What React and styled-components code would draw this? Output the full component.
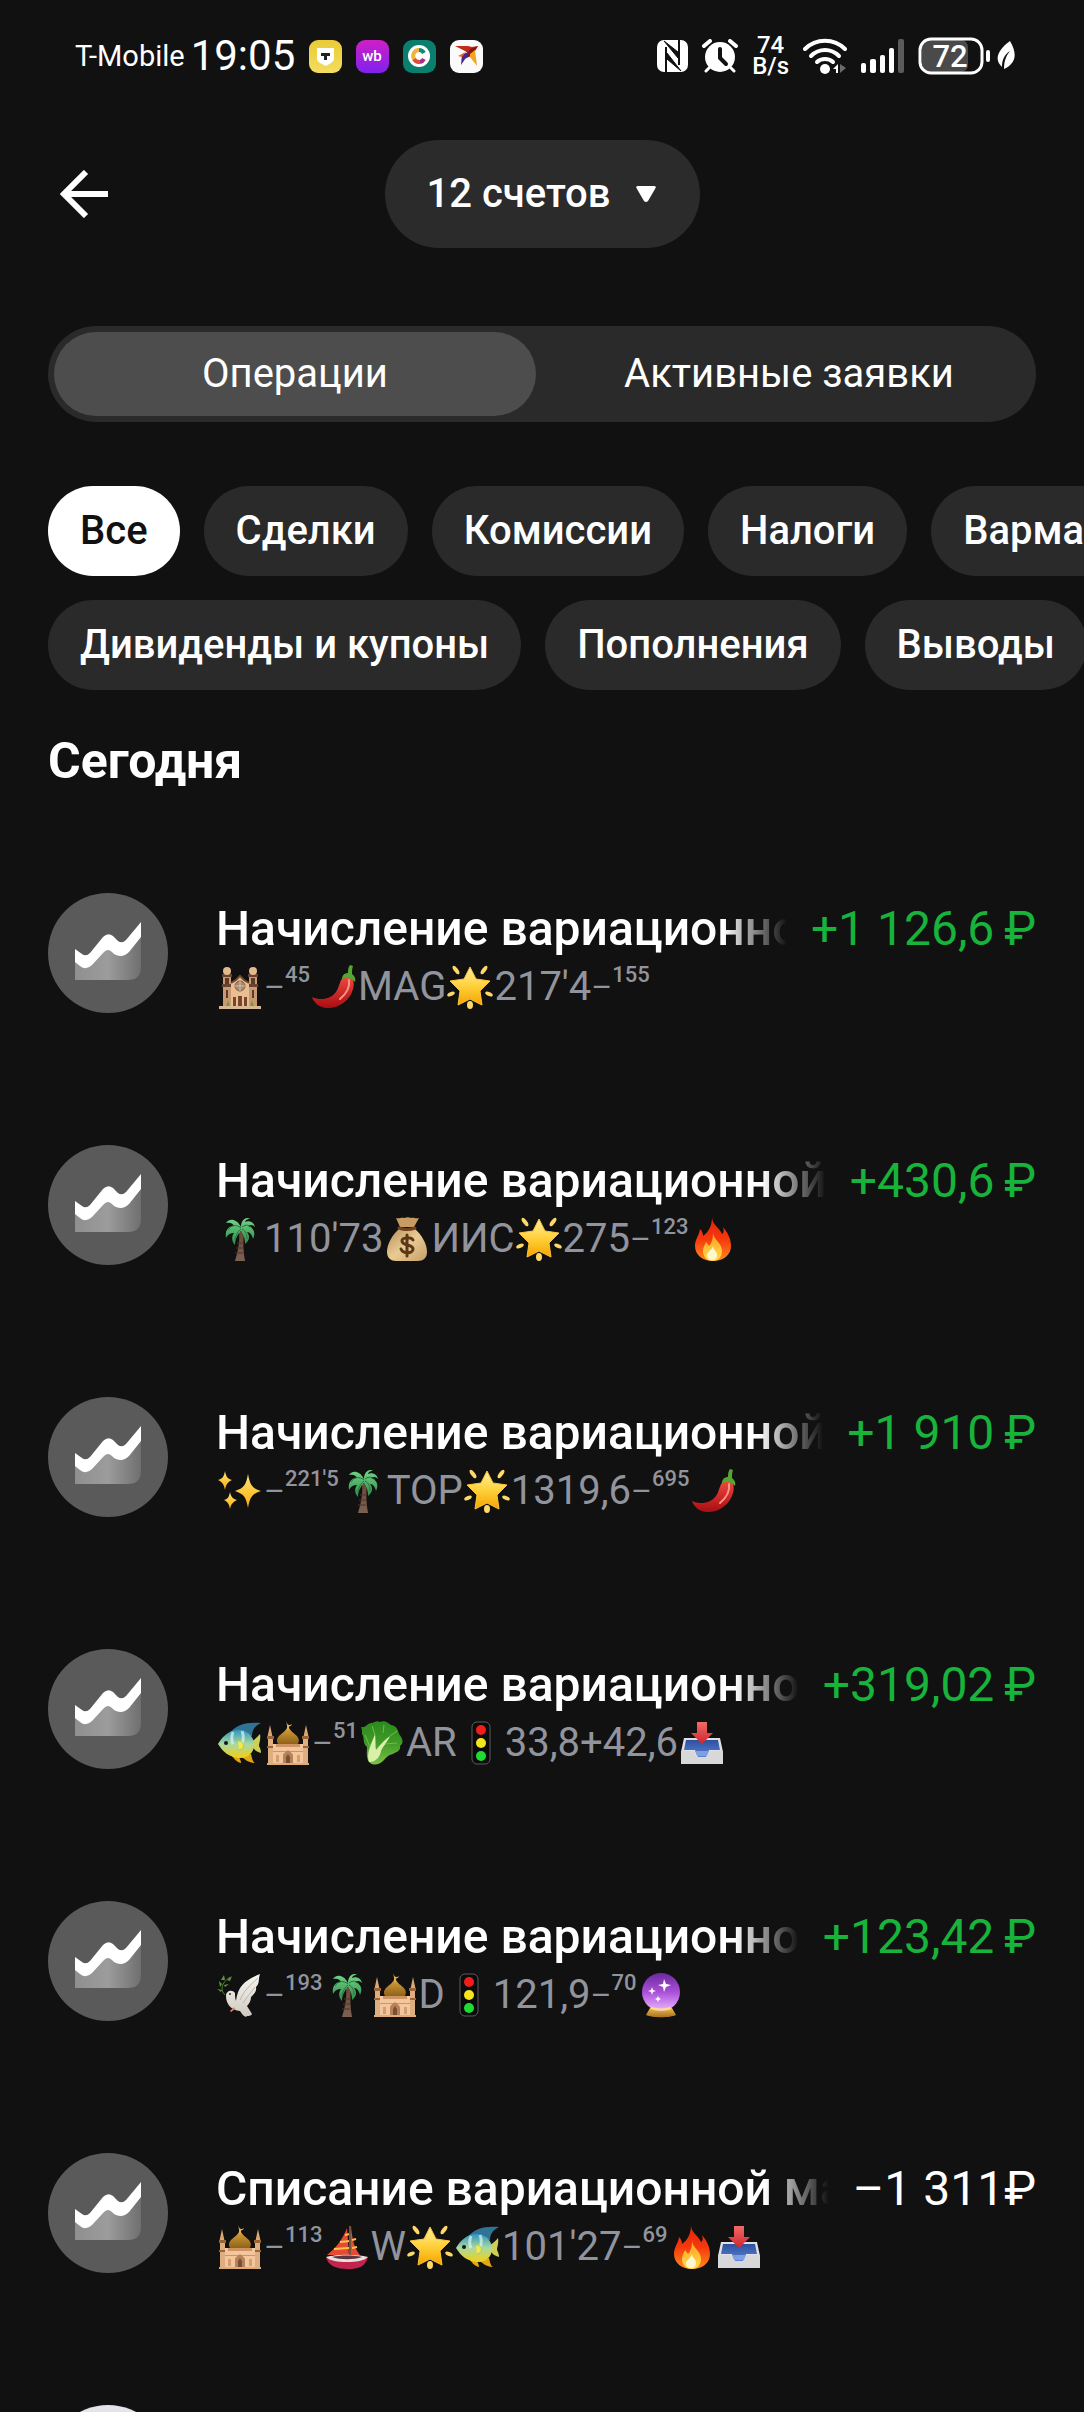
import React, { useState } from 'react';
import styled, { createGlobalStyle } from 'styled-components';

const GlobalStyle = createGlobalStyle`
  * { box-sizing: border-box; }
  body { margin: 0; background: #111111; }
  button, select { font: inherit; color: inherit; border: 0; margin: 0; cursor: pointer; }
`;

const Screen = styled.div`
  height: 100vh;
  display: flex;
  flex-direction: column;
  overflow: hidden;
  background: #111111;
  color: #ffffff;
  font-family: Roboto, 'Noto Sans', sans-serif;
  font-size: 40px;
  line-height: 48px;
`;

const StatusBar = styled.div`
  height: 112px;
  flex: none;
  padding: 0 68px 0 75px;
  display: flex;
  align-items: center;
  justify-content: space-between;
`;

const StatusGroup = styled.div`
  display: flex;
  align-items: center;
  gap: ${(p) => p.$gap}px;
`;

const Carrier = styled.span`
  font-size: 29px;
`;

const Clock = styled.time`
  font-size: 42px;
`;

const Speed = styled.span`
  display: flex;
  flex-direction: column;
  align-items: center;
  font-size: 24px;
  font-weight: 500;
  line-height: 21px;
`;

const TopBar = styled.header`
  flex: none;
  padding: 28px 48px 78px;
  display: grid;
  grid-template-columns: 1fr auto 1fr;
  align-items: center;
`;

const BackButton = styled.button`
  justify-self: start;
  display: flex;
  padding: 12px;
  background: none;
`;

const AccountPicker = styled.div`
  display: inline-grid;
  align-items: center;
  > * { grid-area: 1 / 1; }
  > svg { justify-self: end; margin-right: 44px; pointer-events: none; }
`;

const AccountSelect = styled.select`
  appearance: none;
  height: 108px;
  padding: 0 88px 0 42px;
  border-radius: 54px;
  background: #2b2b2b;
  font-weight: 500;
`;

const Segmented = styled.div`
  flex: none;
  margin: 0 48px;
  padding: 6px;
  display: flex;
  gap: 12px;
  border-radius: 48px;
  background: #2a2a2a;
`;

const Segment = styled.button`
  flex: 1;
  height: 84px;
  border-radius: 42px;
  background: ${(p) => (p.$active ? '#4d4d4d' : 'transparent')};
`;

const Filters = styled.div`
  flex: none;
  padding: 64px 0 43px;
  display: flex;
  flex-direction: column;
  gap: 24px;
`;

const ChipRow = styled.div`
  display: flex;
  gap: 24px;
  padding-left: 48px;
  overflow-x: auto;
  scrollbar-width: none;
`;

const Chip = styled.button`
  flex: none;
  height: 90px;
  padding: 0 32px;
  border-radius: 45px;
  font-weight: 500;
  background: ${(p) => (p.$active ? '#ffffff' : '#2a2a2a')};
  color: ${(p) => (p.$active ? '#111111' : '#ffffff')};
`;

const Feed = styled.main`
  flex: 1;
  min-height: 0;
  overflow-y: auto;
  scrollbar-width: none;
`;

const DayTitle = styled.h2`
  margin: 0 48px 104px;
  font-size: 50px;
  line-height: 56px;
  font-weight: 700;
`;

const OperationList = styled.ul`
  list-style: none;
  margin: 0;
  padding: 0 48px;
  display: flex;
  flex-direction: column;
  gap: 132px;
`;

const OperationRow = styled.li`
  min-height: 120px;
  display: flex;
  align-items: flex-start;
  gap: 48px;
`;

const Avatar = styled.div`
  flex: none;
  width: 120px;
  height: 120px;
  border-radius: 50%;
  background: ${(p) => (p.$light ? '#e2e4e9' : '#5a5a5a')};
`;

const OperationBody = styled.div`
  flex: 1;
  min-width: 0;
  padding-top: 8px;
  display: flex;
  flex-direction: column;
  gap: 6px;
`;

const Headline = styled.div`
  display: flex;
  gap: 24px;
  font-size: 48px;
  line-height: 56px;
`;

const Title = styled.span`
  flex: 1;
  min-width: 0;
  overflow: hidden;
  white-space: nowrap;
  font-weight: 500;
  mask-image: linear-gradient(to right, #000 calc(100% - 64px), transparent);
`;

const Amount = styled.span`
  flex: none;
  white-space: nowrap;
  color: ${(p) => (p.$income ? '#17b33b' : '#ffffff')};
`;

const Account = styled.div`
  display: flex;
  align-items: center;
  height: 48px;
  white-space: nowrap;
  color: #92949d;
`;

const Dash = styled.span`
  font-size: 32px;
`;

const Sup = styled.sup`
  align-self: flex-start;
  font-size: 22px;
  line-height: 24px;
  font-weight: 500;
`;

const EmojiSvg = styled.svg`
  flex: none;
  width: 48px;
  height: 48px;
`;

const SharedDefs = styled.svg`
  display: block;
  width: 0;
  height: 0;
`;

function Gradient({ id, from, mid, to, x2 = 0, y2 = 1 }) {
  return (
    <linearGradient id={id} x1="0" y1="0" x2={x2} y2={y2}>
      <stop offset="0" stopColor={from} />
      {mid && <stop offset="0.5" stopColor={mid} />}
      <stop offset="1" stopColor={to} />
    </linearGradient>
  );
}

const glyphs = {
  synagogue: (
    <>
      <path d="M7 14h8v30H7zM33 14h8v30h-8z" fill="#c99a72" />
      <path d="M6 11h10v3H6zM32 11h10v3H32zM6 21h10v3H6zM32 21h10v3H32z" fill="#6b4230" />
      <circle cx="11" cy="8" r="4" fill="#e3b98f" />
      <circle cx="37" cy="8" r="4" fill="#e3b98f" />
      <path d="M15 20l5-3 4-4 4 4 5 3v24H15z" fill="#e8bf93" />
      <path d="M15 20l5-3 4-4 4 4 5 3" fill="none" stroke="#75492f" strokeWidth="2" />
      <circle cx="24" cy="23" r="5" fill="#a68a78" stroke="#8a5a3d" strokeWidth="1" />
      <path d="M24 18v10M19 23h10" stroke="#d9c0a6" strokeWidth="1" />
      <path d="M9 15h4v6H9zM35 15h4v6h-4zM10 27h2v8h-2zM36 27h2v8h-2z" fill="#5d3b2b" />
      <path d="M17 34h3v9h-3zM22 33h4v10h-4zM28 34h3v9h-3z" fill="#79452b" />
      <path d="M12 37l2 7h-4zM36 37l2 7h-4z" fill="#6f9a35" />
      <path d="M3 43h42v3H3z" fill="#d8b796" />
    </>
  ),
  chili: (
    <>
      <path d="M35 13c8-1 10 6 8 13C40 38 28 46 16 45 9 44 4 40 2 34c9 4 19 2 24-5 4-6 4-14 9-16z" fill="url(#chiliSkin)" />
      <path d="M39 17c1 7-3 14-9 19" fill="none" stroke="#ff9489" strokeWidth="2" strokeLinecap="round" />
      <path d="M32 16c0-4 3-6 6-6 0-3 0-5 2-8l3 1c-1 3-1 5-1 8 3 2 4 5 3 8-4-4-8-5-13-3z" fill="#55a630" />
    </>
  ),
  star: (
    <>
      <path d="M24 4l6 12 14 2-10 10 2 14-12-6-12 6 2-14L4 18l14-2z" fill="url(#starFill)" stroke="#fdc435" strokeWidth="1" strokeLinejoin="round" />
      <g fill="#ffd968">
        <ellipse cx="10" cy="7" rx="2" ry="5" transform="rotate(-36 10 7)" />
        <ellipse cx="38" cy="7" rx="2" ry="5" transform="rotate(36 38 7)" />
        <ellipse cx="5" cy="31" rx="2" ry="4" transform="rotate(66 5 31)" />
        <ellipse cx="43" cy="31" rx="2" ry="4" transform="rotate(-66 43 31)" />
        <ellipse cx="24" cy="42" rx="3" ry="4" />
      </g>
    </>
  ),
  palm: (
    <>
      <path d="M23 17c1 10-1 19-4 29h10c-2-10-2-20-1-29z" fill="url(#trunk)" />
      <path d="M19 38h8M20 33h7M21 28h6" stroke="#4f3528" strokeWidth="1" />
      <path d="M25 12C20 2 12 4 10 8c5-1 7 1 8 3-7 0-9 6-8 12 2-4 5-5 8-5-3 4-2 9 1 12 0-6 3-11 6-14 3 4 4 8 4 13 5-4 5-8 2-12 3 0 5 3 6 7 3-6 1-11-5-13 3-2 5-1 7 1-1-5-6-7-10-5 1-3 3-3 5-3-4-3-9 1-9 8z" fill="url(#palmLeaf)" />
      <path d="M25 13c-5-4-10-3-13 2M25 14c-4 3-5 7-6 11M26 14c4 2 5 6 5 10M26 12c4-3 8-2 10 1" fill="none" stroke="#27713f" strokeWidth="1" />
    </>
  ),
  moneybag: (
    <>
      <path d="M17 12L13 3c4 1 5-1 8 0 3-1 5-1 7 0 3-1 4 1 8 0l-5 9z" fill="#c79b62" />
      <path d="M17 13h14c8 7 13 16 13 24 0 6-4 9-9 9H13c-5 0-9-3-9-9 0-8 5-17 13-24z" fill="url(#bag)" />
      <path d="M16 13c5 2 11 2 16 0" fill="none" stroke="#6f4320" strokeWidth="3" strokeLinecap="round" />
      <path d="M30 25c-2-3-11-3-11 1 0 5 11 3 11 8 0 5-10 5-12 0M24 20v21" fill="none" stroke="#5c3818" strokeWidth="3" strokeLinecap="round" />
    </>
  ),
  fire: (
    <>
      <path d="M24 2c0 8 8 11 10 17 2-1 2-4 1-7 5 6 8 12 8 19 0 9-8 15-18 15S7 40 7 31c0-7 4-10 5-17 2 2 3 4 3 7 6-4 9-11 9-19z" fill="url(#flameOuter)" />
      <path d="M25 18c1 7 9 10 9 18 0 6-4 10-9 10-6 0-10-4-10-10 0-4 2-6 3-9l3 4c3-3 4-8 4-13z" fill="url(#flameInner)" />
      <path d="M25 31c0 4 4 5 4 9 0 3-2 5-5 5s-5-2-5-5 5-5 6-9z" fill="#fff7cf" />
    </>
  ),
  sparkles: (
    <g fill="url(#sparkleFill)">
      <path d="M32 7c2 11 4 14 13 17-9 3-11 6-13 17-2-11-4-14-13-17 9-3 11-6 13-17z" />
      <path d="M9 4c1 6 3 8 7 9-4 2-6 4-7 10-1-6-3-8-7-10 4-1 6-3 7-9z" />
      <path d="M14 25c1 5 3 7 7 8-4 2-6 4-7 9-1-5-2-7-6-9 4-1 5-3 6-8z" />
    </g>
  ),
  fish: (
    <>
      <path d="M13 15C20 5 31 3 45 4c-6 3-9 7-9 13z" fill="#2f7396" />
      <path d="M36 22c4-2 6-5 8-7 1 5-1 9-1 12 1 2 2 4 2 7-4-1-7-3-9-7z" fill="#cfcf58" />
      <path d="M14 35c4 4 6 8 11 9 0-2-1-4-2-6zM24 37c5 3 8 7 15 7-3-2-3-6-4-9z" fill="#e2a616" />
      <path d="M2 25C8 15 16 10 25 11c9 2 13 8 13 15 0 8-7 14-15 13C13 38 7 33 2 25z" fill="url(#fishBody)" />
      <path d="M17 13c-2 5-2 8 0 12M26 12c2 5 2 8 0 12" fill="none" stroke="#d9f6ef" strokeWidth="3" opacity="0.7" />
      <path d="M22 22c6-1 8 8 1 9" fill="#f6e750" stroke="#9fcf62" strokeWidth="1" />
      <circle cx="10" cy="24" r="2" fill="#161616" />
    </>
  ),
  mosque: (
    <>
      <path d="M3 20l3-14 3 14zM39 20l3-14 3 14z" fill="#dca871" />
      <path d="M4 18h5v28H4zM39 18h5v28h-5z" fill="#dfae80" />
      <path d="M3 17h7v3H3zM38 17h7v3h-7zM3 27h7v2H3zM38 27h7v2h-7z" fill="#9a6538" />
      <path d="M14 25c-4-8 6-10 9-16h2c3 6 13 8 9 16z" fill="url(#dome)" />
      <path d="M23 2c-1 4 3 5 5 3-1 4-7 3-5-3zM23 6h2v5h-2z" fill="#e2ad4d" />
      <path d="M9 25h30v21H9z" fill="#f4c69d" />
      <path d="M12 25h24v3H12zM9 32h30v1H9z" fill="#cf9463" />
      <path d="M19 46V37c0-3 3-4 5-6 2 2 5 3 5 6v9z" fill="#b98255" />
      <path d="M22 46v-8l2-3 2 3v8z" fill="#73513d" />
      <path d="M12 36h3v7h-3zM33 36h3v7h-3z" fill="#d79d6c" />
      <path d="M3 44h42v2H3z" fill="#e0ac7c" />
    </>
  ),
  lettuce: (
    <>
      <path d="M3 8c5 1 5-3 10-4 4 0 5-3 9-1 5-2 8 1 11 3 6 1 7 5 8 9 4 5 5 9 1 12 1 5-4 6-7 8-5 1-7 4-10 7-4 4-10 5-14 1-3-5-2-10-2-15-5-4-2-9-5-13 0-3 0-5-1-7z" fill="url(#lettuceLeaf)" />
      <path d="M11 43c-3-9 2-17 6-28 1 6 0 12 1 16 4-5 8-10 14-14-3 7-7 10-9 15-1 6-5 11-12 11z" fill="#d9efaa" />
      <path d="M17 16L14 7M12 28L7 16M32 17l7-5M27 25l12-1M25 14l1-8" stroke="#75ba48" strokeWidth="1" />
    </>
  ),
  traffic: (
    <>
      <rect x="15" y="3" width="18" height="42" rx="5" fill="#0b0b0b" stroke="#5c5c5c" strokeWidth="1" />
      <circle cx="24" cy="11" r="5" fill="#f01d1d" />
      <circle cx="24" cy="24" r="5" fill="#f4e51d" />
      <circle cx="24" cy="37" r="5" fill="#1ddd32" />
    </>
  ),
  inbox: (
    <>
      <path d="M6 19h36l3 14v12H3V33z" fill="#dfe0e3" />
      <path d="M8 21h32l2 10H31l-3 7H20l-3-7H6z" fill="url(#tray)" />
      <path d="M3 32h12c2 0 2 6 5 6h8c3 0 3-6 5-6h12v13H3z" fill="#d8d8da" />
      <path d="M17 32h14l-2 5H19z" fill="#7f9fe0" />
      <path d="M19 3h10v11h6L24 25 13 14h6z" fill="url(#arrowFill)" />
    </>
  ),
  dove: (
    <>
      <path d="M20 30C22 14 30 9 44 3c-2 6 0 9-4 13 1 5-3 8-5 10 0 4-2 7-4 9l5 8c-2 3-5 1-6 3-3-1-4-3-6-6-9-1-14-7-14-15 0-5 6-7 9-3 0 3 0 5 1 8z" fill="url(#doveBody)" />
      <path d="M24 29c4-9 9-14 18-22M27 32c4-6 7-9 12-16" fill="none" stroke="#bdb6aa" strokeWidth="1" />
      <circle cx="14" cy="23" r="1" fill="#332d2a" />
      <path d="M9 24c-5-5-4-12 5-18" fill="none" stroke="#4f7f2c" strokeWidth="1" />
      <path d="M6 13l-3-3 1 6zM9 9L8 4 5 9zM11 9l5-4-2 5zM8 14l5-1-4 3zM6 19l-5-1 4 3z" fill="#5b9e34" />
      <path d="M14 40l4-4 1 2-4 3z" fill="#dc8862" />
    </>
  ),
  crystal: (
    <>
      <path d="M13 37h22l4 7c-6 3-24 3-30 0z" fill="url(#stand)" />
      <circle cx="24" cy="21" r="19" fill="url(#orb)" />
      <path d="M27 8l2 5 5 1-5 2-2 5-1-5-5-2 5-1zM15 16l1 3 3 1-3 1-1 3-1-3-3-1 3-1zM21 25l1 2 2 1-2 1-1 2-1-2-2-1 2-1z" fill="#fff" />
      <path d="M14 37c5 2 15 2 20 0" fill="none" stroke="#ffdf8c" strokeWidth="2" />
    </>
  ),
  sailboat: (
    <>
      <path d="M28 3c1 12 3 22 9 29H26zM24 5C20 16 12 26 4 32h22z" fill="#e44b32" />
      <path d="M22 12l5-1M17 19l10-1M11 26l15-1M29 17l4-1M29 25l5-1" stroke="#ffc04b" strokeWidth="2" />
      <path d="M27 3v31" stroke="#79503c" strokeWidth="2" />
      <path d="M3 34c10 4 31 4 42 0-3 10-9 12-20 12S5 43 3 34z" fill="#c3244d" />
      <path d="M3 34c10-3 31-3 42 0-4 4-12 5-21 5S7 38 3 34z" fill="#eadfdc" />
      <path d="M9 34c8-2 22-2 30 0-8 3-22 3-30 0z" fill="#5d3440" />
    </>
  ),
};

const glyphNames = {
  synagogue: 'Синагога', chili: 'Перец', star: 'Звезда', palm: 'Пальма', moneybag: 'Мешок денег',
  fire: 'Огонь', sparkles: 'Искры', fish: 'Рыба', mosque: 'Мечеть', lettuce: 'Салат',
  traffic: 'Светофор', inbox: 'Входящие', dove: 'Голубь', crystal: 'Хрустальный шар', sailboat: 'Парусник',
};

function Emoji({ name }) {
  return <EmojiSvg viewBox="0 0 48 48" role="img" aria-label={glyphNames[name]}>{glyphs[name]}</EmojiSvg>;
}

function EmojiDefs() {
  return (
    <SharedDefs aria-hidden="true">
      <defs>
        <Gradient id="chiliSkin" from="#f04a41" to="#a90d12" />
        <Gradient id="starFill" from="#fff0a0" mid="#ffd13b" to="#f5a300" />
        <Gradient id="trunk" from="#6a4836" to="#7c6153" />
        <Gradient id="palmLeaf" from="#74d58a" to="#2b8a46" />
        <Gradient id="bag" from="#b78c55" mid="#e8cb93" to="#c59f68" x2={1} />
        <Gradient id="flameOuter" from="#e3230b" mid="#f5380c" to="#ff8b1d" />
        <Gradient id="flameInner" from="#ff9b1f" to="#ffe14b" />
        <Gradient id="sparkleFill" from="#ffe48a" mid="#ffc83b" to="#f7ad1d" />
        <Gradient id="fishBody" from="#2f94bd" mid="#a9d9a2" to="#f3cf10" />
        <Gradient id="dome" from="#d6a03a" to="#8f6219" />
        <Gradient id="lettuceLeaf" from="#2b8a1e" mid="#3f9b26" to="#7cc04a" />
        <Gradient id="tray" from="#2d4f9f" to="#5c83d4" />
        <Gradient id="arrowFill" from="#f06a68" to="#d0252c" />
        <Gradient id="doveBody" from="#f8f6f2" to="#cfc9c0" />
        <Gradient id="stand" from="#f0b94a" to="#a8721e" />
        <Gradient id="orb" from="#6b2a9c" mid="#a94fd9" to="#eeb5ff" />
        <Gradient id="chartArea" from="#8f8f8f" mid="#9c9c9c" to="#6f6f6f" x2={1} y2={0} />
        <Gradient id="bankYellow" from="#e9cb35" to="#f4dd60" />
        <Gradient id="shopPurple" from="#cf1fc4" to="#7f22ee" />
      </defs>
    </SharedDefs>
  );
}

function ChartIcon() {
  return (
    <svg width="120" height="120" viewBox="0 0 120 120" aria-hidden="true">
      <path d="M27 62L40 68L60 48L73 57L93 38V74Q93 87 80 87H27Z" fill="url(#chartArea)" />
      <path d="M27 56L34 61Q38 64 42 60L55 44Q60 39 65 43L70 48Q74 51 78 47L93 29V44L81 59Q74 66 66 61L64 59Q60 55 56 59L44 72Q38 78 32 73L27 69Z" fill="#fff" />
    </svg>
  );
}

function AppIcons() {
  return (
    <>
      <svg width="33" height="33" viewBox="0 0 33 33" aria-hidden="true">
        <rect width="33" height="33" rx="9" fill="url(#bankYellow)" />
        <path d="M8 8h17v11c0 3-5 5-8 7-4-2-9-4-9-7z" fill="#fff" />
        <path d="M12 13h9v3h-3v4h-3v-4h-3z" fill="#222" />
      </svg>
      <svg width="33" height="33" viewBox="0 0 33 33" aria-hidden="true">
        <rect width="33" height="33" rx="9" fill="url(#shopPurple)" />
        <text x="16" y="21" textAnchor="middle" fontSize="15" fontWeight="500" fill="#fff">wb</text>
      </svg>
      <svg width="33" height="33" viewBox="0 0 33 33" aria-hidden="true">
        <rect width="33" height="33" rx="9" fill="#0b7f6d" />
        <circle cx="16" cy="16" r="11" fill="#fff" />
        <g fill="none" strokeWidth="4">
          <path d="M21 13A6 6 0 0 0 16 10" stroke="#138a72" />
          <path d="M16 10A6 6 0 0 0 11 19" stroke="#efb43b" />
          <path d="M11 19A6 6 0 0 0 17 22" stroke="#df4e37" />
          <path d="M17 22A6 6 0 0 0 21 19" stroke="#a32e83" />
        </g>
      </svg>
      <svg width="33" height="33" viewBox="0 0 33 33" aria-hidden="true">
        <rect width="33" height="33" rx="9" fill="#fafafa" />
        <path d="M5 6h13l4 1 6-1-3 5-4 5-6-5z" fill="#c22b18" />
        <path d="M28 6l-7 10-9 4 8-11z" fill="#8c1512" />
        <path d="M12 14l8-2-9 13z" fill="#4a2390" />
        <path d="M20 14l5-4 2 16-7-9z" fill="#f0a51d" />
        <path d="M8 16l8-4-4 5z" fill="#e8641c" />
      </svg>
    </>
  );
}

function SystemIcons() {
  return (
    <>
      <svg width="31" height="32" viewBox="0 0 31 32" aria-hidden="true">
        <rect width="31" height="32" rx="7" fill="#fff" />
        <path d="M9 32V7M22 0V25" stroke="#111" strokeWidth="2" />
        <path d="M7 1L21 12V18ZM10 13V19L24 31Z" fill="#111" stroke="#111" strokeWidth="1" />
      </svg>
      <svg width="36" height="34" viewBox="0 0 36 34" aria-hidden="true">
        <path d="M2 7l6-5M34 7l-6-5" stroke="#fff" strokeWidth="4" strokeLinecap="round" />
        <path d="M8 28l-4 4M28 28l4 4" stroke="#fff" strokeWidth="3" strokeLinecap="round" />
        <circle cx="18" cy="18" r="15" fill="#fff" />
        <path d="M18 10v9l6 6" fill="none" stroke="#111" strokeWidth="4" strokeLinecap="round" strokeLinejoin="round" />
      </svg>
      <Speed><span>74</span><span>B/s</span></Speed>
      <svg width="44" height="36" viewBox="0 0 44 36" aria-hidden="true">
        <g fill="none" stroke="#fff" strokeWidth="4" strokeLinecap="round">
          <path d="M2 11C13 0 31 0 42 11" />
          <path d="M8 18C16 10 28 10 36 18" />
          <path d="M14 24C18 20 26 20 30 24" />
        </g>
        <circle cx="22" cy="31" r="5" fill="#fff" />
        <path d="M30 31l5-5v9h-2v-4z" fill="#fff" />
        <path d="M37 26v9l6-5z" fill="#6b6b6b" />
      </svg>
      <svg width="43" height="34" viewBox="0 0 43 34" aria-hidden="true">
        <g fill="#fff">
          <rect x="0" y="24" width="5" height="10" rx="2" />
          <rect x="9" y="20" width="6" height="14" rx="2" />
          <rect x="19" y="16" width="5" height="18" rx="2" />
          <rect x="28" y="9" width="5" height="25" rx="2" />
        </g>
        <rect x="37" y="0" width="6" height="34" rx="2" fill="#5b5b5b" />
      </svg>
      <svg width="98" height="38" viewBox="0 0 98 38" role="img" aria-label="72">
        <rect x="4" y="3" width="46" height="32" rx="7" fill="#4a4a4a" />
        <rect x="2" y="2" width="62" height="34" rx="11" fill="none" stroke="#fff" strokeWidth="3" />
        <text x="32" y="30" textAnchor="middle" fontSize="31" fontWeight="500" fill="#fff">72</text>
        <rect x="68" y="13" width="4" height="12" rx="2" fill="#fff" />
        <path d="M92 4c7 12 7 22-6 28 0-8 2-13 6-18-6 4-8 9-8 16-9-8-3-18 8-26z" fill="#fff" />
      </svg>
    </>
  );
}

const chipRows = [
  ['Все', 'Сделки', 'Комиссии', 'Налоги', 'Вармаржа'],
  ['Дивиденды и купоны', 'Пополнения', 'Выводы'],
];

const accrual = 'Начисление вариационной маржи';
const e = (name) => ({ emoji: name });
const s = (text) => ({ raised: text });

const operations = [
  { title: accrual, amount: '+1 126,6\u2009₽', income: true,
    account: [e('synagogue'), '–', s('45'), e('chili'), 'MAG', e('star'), "217'4", '–', s('155')] },
  { title: accrual, amount: '+430,6\u2009₽', income: true,
    account: [e('palm'), "110'73", e('moneybag'), 'ИИС', e('star'), '275', '–', s('123'), e('fire')] },
  { title: accrual, amount: '+1 910\u2009₽', income: true,
    account: [e('sparkles'), '–', s('221ˈ5'), e('palm'), 'TOP', e('star'), '1319,6', '–', s('695'), e('chili')] },
  { title: accrual, amount: '+319,02\u2009₽', income: true,
    account: [e('fish'), e('mosque'), '–', s('51'), e('lettuce'), 'AR', e('traffic'), '33,8+42,6', e('inbox')] },
  { title: accrual, amount: '+123,42\u2009₽', income: true,
    account: [e('dove'), '–', s('193'), e('palm'), e('mosque'), 'D', e('traffic'), '121,9', '–', s('70'), e('crystal')] },
  { title: 'Списание вариационной маржи', amount: '–1 311₽', income: false,
    account: [e('mosque'), '–', s('113'), e('sailboat'), 'W', e('star'), e('fish'), "101'27", '–', s('69'), e('fire'), e('inbox')] },
];

function AccountPart({ part }) {
  if (part === '–') return <Dash>–</Dash>;
  if (typeof part === 'string') return <span>{part}</span>;
  return part.emoji ? <Emoji name={part.emoji} /> : <Sup>{part.raised}</Sup>;
}

function Operation({ title, amount, income, account }) {
  return (
    <OperationRow>
      <Avatar><ChartIcon /></Avatar>
      <OperationBody>
        <Headline>
          <Title>{title}</Title>
          <Amount $income={income}>{amount}</Amount>
        </Headline>
        <Account>
          {account.map((part, i) => <AccountPart key={i} part={part} />)}
        </Account>
      </OperationBody>
    </OperationRow>
  );
}

export default function App() {
  const [tab, setTab] = useState('Операции');
  const [filter, setFilter] = useState('Все');
  return (
    <Screen>
      <GlobalStyle />
      <EmojiDefs />
      <StatusBar>
        <StatusGroup $gap={14}>
          <StatusGroup $gap={6}>
            <Carrier>T-Mobile</Carrier>
            <Clock>19:05</Clock>
          </StatusGroup>
          <AppIcons />
        </StatusGroup>
        <StatusGroup $gap={14}>
          <SystemIcons />
        </StatusGroup>
      </StatusBar>

      <TopBar>
        <BackButton aria-label="Назад">
          <svg width="48" height="48" viewBox="0 0 48 48" fill="none" stroke="#fff" strokeWidth="6">
            <path d="M26 2L4 24l22 22M4 24h44" />
          </svg>
        </BackButton>
        <AccountPicker>
          <AccountSelect aria-label="Счета" defaultValue="12">
            <option value="12">12 счетов</option>
          </AccountSelect>
          <svg width="20" height="16" viewBox="0 0 20 16" aria-hidden="true">
            <path d="M2 0h16q3 0 1 3l-7 12q-2 2-4 0L1 3q-2-3 1-3z" fill="#fff" />
          </svg>
        </AccountPicker>
      </TopBar>

      <Segmented role="tablist">
        {['Операции', 'Активные заявки'].map((name) => (
          <Segment key={name} role="tab" aria-selected={tab === name} $active={tab === name} onClick={() => setTab(name)}>
            {name}
          </Segment>
        ))}
      </Segmented>

      <Filters>
        {chipRows.map((row) => (
          <ChipRow key={row[0]}>
            {row.map((name) => (
              <Chip key={name} aria-pressed={filter === name} $active={filter === name} onClick={() => setFilter(name)}>
                {name}
              </Chip>
            ))}
          </ChipRow>
        ))}
      </Filters>

      <Feed>
        <DayTitle>Сегодня</DayTitle>
        <OperationList>
          {operations.map((op, i) => <Operation key={i} {...op} />)}
          <OperationRow><Avatar $light /></OperationRow>
        </OperationList>
      </Feed>
    </Screen>
  );
}
